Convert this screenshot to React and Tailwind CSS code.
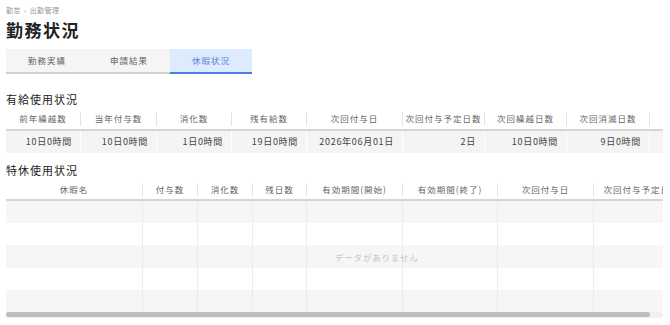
import React from "react";

const font = { fontFamily: '"Noto Sans CJK JP", "Noto Sans", sans-serif' };

const paidCols = [
  { label: "前年繰越数", w: "w-[75px]", value: "10日0時間" },
  { label: "当年付与数", w: "w-[76px]", value: "10日0時間" },
  { label: "消化数", w: "w-[75px]", value: "1日0時間" },
  { label: "残有給数", w: "w-[75px]", value: "19日0時間" },
  { label: "次回付与日", w: "w-[96px]", value: "2026年06月01日" },
  { label: "次回付与予定日数", w: "w-[82px]", value: "2日" },
  { label: "次回繰越日数", w: "w-[82px]", value: "10日0時間" },
  { label: "次回消滅日数", w: "w-[83px]", value: "9日0時間" },
  { label: "", w: "w-[60px]", value: "" },
];

const specialCols = [
  { label: "休暇名", w: "w-[137px]" },
  { label: "付与数", w: "w-[55px]" },
  { label: "消化数", w: "w-[55px]" },
  { label: "残日数", w: "w-[54px]" },
  { label: "有効期間(開始)", w: "w-[96px]" },
  { label: "有効期間(終了)", w: "w-[95px]" },
  { label: "次回付与日", w: "w-[96px]" },
  { label: "次回付与予定日数", w: "w-[96px]" },
];

function HeaderCell({ label, w }) {
  return (
    <div className={`${w} shrink-0 flex items-center h-full`}>
      <div className="flex-1 text-center whitespace-nowrap overflow-hidden text-[8.5px] tracking-[1px] text-[#666]">
        {label}
      </div>
      <div className="w-px h-[14px] bg-[#e4e4e4] shrink-0" />
    </div>
  );
}

function PaidTable() {
  return (
    <div className="w-[657px] overflow-hidden">
      <div className="flex h-[23px] border-b-2 border-[#d6d6d6] w-max">
        {paidCols.map((c, i) => (
          <HeaderCell key={i} label={c.label} w={c.w} />
        ))}
      </div>
      <div className="flex h-[22px] bg-[#f4f4f4] w-max">
        {paidCols.map((c, i) => (
          <div
            key={i}
            className={`${c.w} shrink-0 border-r border-white flex items-center justify-end pr-[8px] text-[9px] tracking-[0.7px] text-[#444] whitespace-nowrap`}
          >
            {c.value}
          </div>
        ))}
      </div>
    </div>
  );
}

function SpecialTable() {
  const rows = [0, 1, 2, 3, 4];
  return (
    <div className="w-[657px]">
      <div className="relative overflow-hidden">
        <div className="flex h-[21px] border-b-2 border-[#d6d6d6] w-max">
          {specialCols.map((c, i) => (
            <HeaderCell key={i} label={c.label} w={c.w} />
          ))}
        </div>
        {rows.map((r) => (
          <div
            key={r}
            className={`flex w-max ${r === 2 ? "h-[23px]" : "h-[22px]"} ${r % 2 === 0 ? "bg-[#f6f6f6]" : "bg-white"}`}
          >
            {specialCols.map((c, i) => (
              <div key={i} className={`${c.w} shrink-0 border-r border-[#ececec]`} />
            ))}
          </div>
        ))}
        <div className="absolute left-[329px] top-[66px] h-[23px] flex items-center text-[8.5px] tracking-[0.8px] text-[#c4c4c4] whitespace-nowrap">
          データがありません
        </div>
      </div>
      <div className="h-[6px] bg-[#f0f0f0] rounded-full">
        <div className="h-[5px] w-[644px] bg-[#bdbdbd] rounded-full" />
      </div>
    </div>
  );
}

export default function App() {
  const tabs = ["勤務実績", "申請結果", "休暇状況"];
  return (
    <div className="w-[670px] h-[325px] bg-white pl-[6px] pr-[7px] overflow-hidden" style={font}>
      <div className="pt-[5px] text-[7px] text-[#999] tracking-[0.5px] leading-[10px] flex items-center gap-[3px]">
        <span>勤怠</span>
        <span className="text-[7px]">›</span>
        <span>出勤管理</span>
      </div>
      <h1 className="mt-[4px] text-[17px] font-bold tracking-[1.5px] text-[#222] leading-[22px]">
        勤務状況
      </h1>
      <div className="mt-[8px] flex">
        {tabs.map((t, i) => (
          <div
            key={t}
            className={`w-[82px] h-[25px] flex items-center justify-center text-[8.5px] tracking-[1px] border-b-2 ${
              i === 2
                ? "bg-[#dcebfd] border-[#4a7fe6] text-[#5a84d4]"
                : "bg-[#f5f5f5] border-[#cfcfcf] text-[#666]"
            }`}
          >
            {t}
          </div>
        ))}
      </div>
      <h2 className="mt-[18px] text-[11px] tracking-[1px] text-[#222] leading-[14px]">有給使用状況</h2>
      <div className="mt-[2px]">
        <PaidTable />
      </div>
      <h2 className="mt-[10px] text-[11px] tracking-[1px] text-[#222] leading-[14px]">特休使用状況</h2>
      <div className="mt-[3px]">
        <SpecialTable />
      </div>
    </div>
  );
}
